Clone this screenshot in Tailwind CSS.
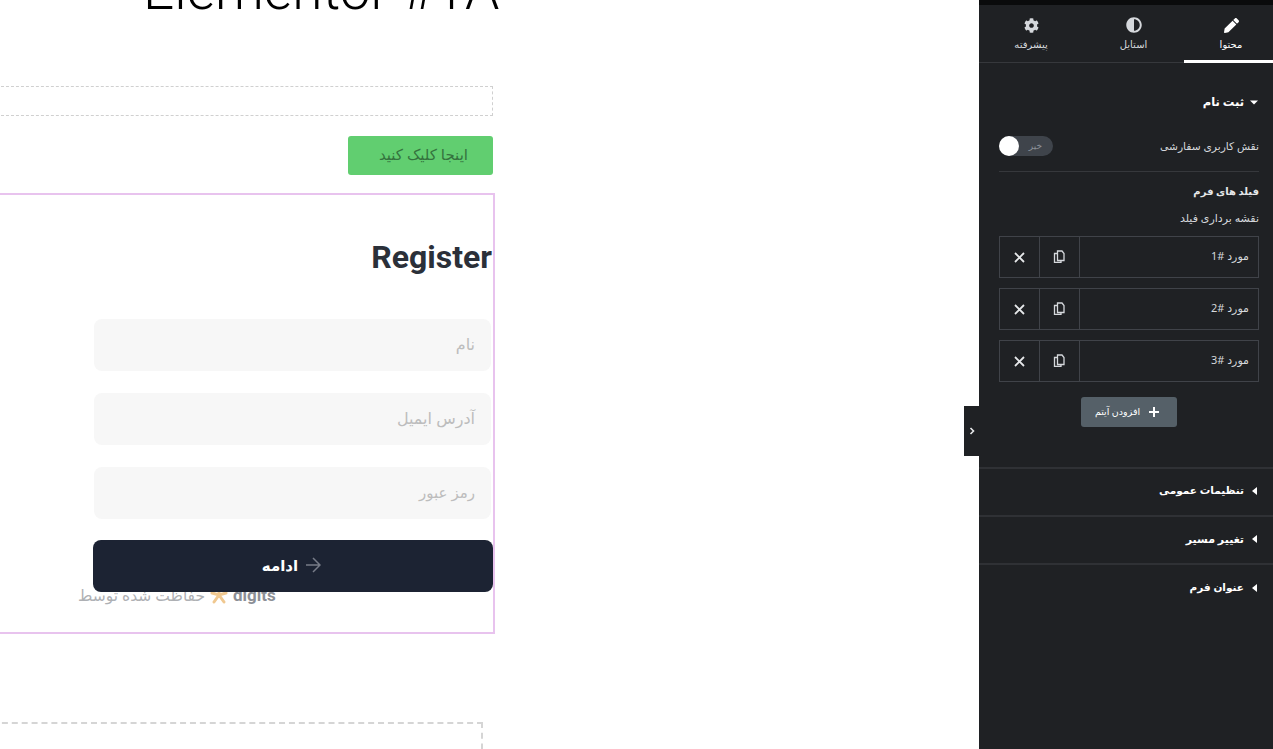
<!DOCTYPE html>
<html lang="fa">
<head>
  <meta charset="UTF-8" />
  <meta name="viewport" content="width=device-width, initial-scale=1.0" />
  <title>Elementor</title>
  <script src="https://cdn.jsdelivr.net/npm/@tailwindcss/browser@4"></script>
</head>
<body class="h-[749px] overflow-hidden bg-white font-['Noto_Sans','DejaVu_Sans',sans-serif]">
  <div class="flex h-[749px]">

    <!-- Canvas -->
    <main class="relative w-[979px] shrink-0 overflow-hidden bg-white">
      <div class="w-[493px]">
        <h1 dir="ltr" class="-mt-[41px] h-[127px] whitespace-nowrap pl-[143px] font-['Roboto',sans-serif] text-[55px] leading-[62px] font-light text-black">Elementor #1A</h1>
        <div class="h-[30px] -ml-1 border border-dashed border-[#d0d0d0]"></div>
        <div class="mt-5 flex justify-end">
          <a dir="rtl" class="flex h-[39px] w-[145px] items-center rounded-[3px] bg-[#61ce70] pr-[25px] pb-[2px] text-[15px] text-[#34733e]">اینجا کلیک کنید</a>
        </div>

        <!-- Selected register widget -->
        <section class="mt-[18px] -ml-1 h-[441px] w-[499px] border-2 border-[#e8c3ee] pt-[44px]">
          <h2 class="pr-[1px] text-right font-['Roboto',sans-serif] text-[32px] leading-[36px] font-bold text-[#2b3039]">Register</h2>
          <form dir="rtl" class="mt-[44px] ml-[95px] flex w-[400px] flex-col">
            <div class="mr-[2px] flex h-[52px] w-[397px] items-center rounded-lg bg-[#f7f7f7] pr-4 pb-[2px] text-[16px] text-[#bdbdbd]">نام</div>
            <div class="mt-[22px] mr-[2px] flex h-[52px] w-[397px] items-center rounded-lg bg-[#f7f7f7] pr-4 pb-[2px] text-[16px] text-[#bdbdbd]">آدرس ایمیل</div>
            <div class="mt-[22px] mr-[2px] flex h-[52px] w-[397px] items-center rounded-lg bg-[#f7f7f7] pr-4 pb-[2px] text-[15px] text-[#bdbdbd]">رمز عبور</div>
            <button type="button" class="relative z-10 mt-[21px] flex h-[52px] w-[400px] items-center justify-center gap-[7px] rounded-lg bg-[#1c2333] pr-[3px] pb-[2px] text-[15px] font-bold text-white">
              <svg class="h-[16px] w-[16px]" viewBox="0 0 16 16" fill="none" stroke="#777c88" stroke-width="1.5"><path d="M1 8h14M8 1l7 7-7 7"/></svg>
              <span>ادامه</span>
            </button>
          </form>
          <div dir="ltr" class="-mt-[7px] ml-[80px] flex items-center gap-[5px] text-[#aeb0b4]">
            <span dir="rtl" class="text-[15.5px] leading-[20px]">حفاظت شده توسط</span>
            <svg class="h-[18px] w-[18px]" viewBox="0 0 18 18" fill="none" stroke="#f0c890" stroke-width="3" stroke-linecap="round"><path d="M9 2v6M2 7l7 2 7-2M4 16l5-7 5 7"/></svg>
            <span class="font-['Roboto',sans-serif] text-[17px] leading-[20px] font-bold text-[#8c8f96]">digits</span>
          </div>
        </section>
      </div>
      <div class="mt-[88px] -ml-2 h-[60px] w-[491px] border-2 border-dashed border-[#d5d5d5]"></div>

      <!-- Panel collapse handle -->
      <button type="button" class="absolute top-[406px] right-0 flex h-[50px] w-[15px] items-center justify-center bg-[#1f2124]">
        <svg class="h-2 w-2" viewBox="0 0 8 8" fill="none" stroke="#e6e8ea" stroke-width="1.6"><path d="M2.5 1l3 3-3 3"/></svg>
      </button>
    </main>

    <!-- Editor panel -->
    <aside dir="rtl" class="flex w-[294px] shrink-0 flex-col bg-[#1f2124] text-[#e6e8ea]">
      <div class="h-[5px] bg-[#0a0b0c]"></div>

      <div class="flex h-[58px] border-b border-[#36383c]">
        <button type="button" class="flex h-[58px] w-[89px] flex-col items-center border-b-[3px] border-white pt-[13px] pl-[5px] text-white">
          <svg class="h-[15px] w-[15px]" viewBox="0 0 512 512" fill="currentColor"><path d="M497.9 142.1l-46.1 46.1c-4.7 4.7-12.3 4.7-17 0l-111-111c-4.7-4.7-4.7-12.3 0-17l46.1-46.1c18.7-18.7 49.1-18.7 67.9 0l60.1 60.1c18.8 18.7 18.8 49.1 0 67.9zM284.2 99.8L21.6 362.4.4 483.9c-2.9 16.4 11.4 30.6 27.8 27.8l121.5-21.3 262.6-262.6c4.7-4.7 4.7-12.3 0-17l-111-111c-4.8-4.7-12.4-4.7-17.1 0z"/></svg>
          <span class="mt-[4px] text-[10px] leading-[14px]">محتوا</span>
        </button>
        <button type="button" class="flex h-[58px] w-[101px] flex-col items-center pt-[12px] text-[#d5d8dc]">
          <svg class="h-[16px] w-[16px]" viewBox="0 0 512 512" fill="currentColor"><path d="M8 256c0 136.967 111.033 248 248 248s248-111.033 248-248S392.967 8 256 8 8 119.033 8 256zm248 184V72c101.705 0 184 82.311 184 184 0 101.705-82.311 184-184 184z"/></svg>
          <span class="mt-[4px] text-[10px] leading-[14px]">استایل</span>
        </button>
        <button type="button" class="flex h-[58px] w-[104px] flex-col items-center pt-[13px] text-[#d5d8dc]">
          <svg class="h-[15px] w-[15px]" viewBox="0 0 512 512" fill="currentColor"><path d="M487.4 315.7l-42.6-24.6c4.3-23.2 4.3-47 0-70.2l42.6-24.6c4.9-2.8 7.1-8.6 5.5-14-11.1-35.6-30-67.8-54.7-94.6-3.8-4.1-10-5.1-14.8-2.3L380.8 110c-17.9-15.4-38.5-27.3-60.8-35.1V25.8c0-5.6-3.9-10.5-9.4-11.7-36.7-8.2-74.3-7.8-109.2 0-5.5 1.2-9.4 6.1-9.4 11.7V75c-22.2 7.9-42.8 19.8-60.8 35.1L88.7 85.5c-4.9-2.8-11-1.9-14.8 2.3-24.7 26.7-43.6 58.9-54.7 94.6-1.7 5.4.6 11.2 5.5 14L67.3 221c-4.3 23.2-4.3 47 0 70.2l-42.6 24.6c-4.9 2.8-7.1 8.6-5.5 14 11.1 35.6 30 67.8 54.7 94.6 3.8 4.1 10 5.1 14.8 2.3l42.6-24.6c17.9 15.4 38.5 27.3 60.8 35.1v49.2c0 5.6 3.9 10.5 9.4 11.7 36.7 8.2 74.3 7.8 109.2 0 5.5-1.2 9.4-6.1 9.4-11.7v-49.2c22.2-7.9 42.8-19.8 60.8-35.1l42.6 24.6c4.9 2.8 11 1.9 14.8-2.3 24.7-26.7 43.6-58.9 54.7-94.6 1.5-5.5-.7-11.3-5.6-14.1zM256 336c-44.1 0-80-35.9-80-80s35.9-80 80-80 80 35.9 80 80-35.9 80-80 80z"/></svg>
          <span class="mt-[4px] text-[10px] leading-[14px]">پیشرفته</span>
        </button>
      </div>

      <!-- Open section -->
      <section class="h-[406px] shrink-0 border-b-2 border-[#2f3135] pr-[14px] pl-[20px]">
        <h3 class="mt-[30px] flex h-[18px] items-center gap-[6px] pr-[1px] text-[11.5px] font-bold text-white">
          <svg class="h-[8px] w-[8px]" viewBox="0 0 8 8" fill="currentColor"><path d="M0 2.5h8L4 6.5z"/></svg>
          ثبت نام
        </h3>
        <div class="mt-[25px] flex h-[20px] items-center justify-between">
          <span class="text-[10.7px] text-[#d5d8dc]">نقش کاربری سفارشی</span>
          <span class="flex h-[20px] w-[54px] items-center justify-between rounded-full bg-[#3f444b]" dir="ltr">
            <span class="h-[20px] w-[20px] rounded-full bg-white"></span>
            <span class="pr-[11px] text-[9px] text-[#8c9198]">خیر</span>
          </span>
        </div>
        <hr class="mt-[15px] border-[#36383c]" />
        <h4 class="mt-[10px] text-[10px] leading-[18px] font-bold text-[#e6e8ea]">فیلد های فرم</h4>
        <p class="mt-[9px] text-[11px] leading-[18px] text-[#d5d8dc]">نقشه برداری فیلد</p>

        <ul class="mt-[9px] flex flex-col gap-[10px]">
          <li class="flex h-[42px] items-stretch border border-[#404349]">
            <span class="flex flex-1 items-center pr-[9px] pb-[2px] text-[11px] text-[#d5d8dc]">مورد #1</span>
            <span class="flex w-[40px] items-center justify-center border-r border-[#404349] pb-[1px]">
              <svg class="h-[13px] w-[13px]" viewBox="0 0 13 13" fill="none" stroke="#d5d8dc" stroke-width="1.3"><path d="M4.5 3.5H1.5v9h6.5v-2.5M4.5 1v9.5H11V3.5L9 1z"/></svg>
            </span>
            <span class="flex w-[40px] items-center justify-center border-r border-[#404349]">
              <svg class="h-[11px] w-[11px]" viewBox="0 0 11 11" fill="none" stroke="#e6e8ea" stroke-width="1.8"><path d="M1 1l9 9M10 1l-9 9"/></svg>
            </span>
          </li>
          <li class="flex h-[42px] items-stretch border border-[#404349]">
            <span class="flex flex-1 items-center pr-[9px] pb-[2px] text-[11px] text-[#d5d8dc]">مورد #2</span>
            <span class="flex w-[40px] items-center justify-center border-r border-[#404349] pb-[1px]">
              <svg class="h-[13px] w-[13px]" viewBox="0 0 13 13" fill="none" stroke="#d5d8dc" stroke-width="1.3"><path d="M4.5 3.5H1.5v9h6.5v-2.5M4.5 1v9.5H11V3.5L9 1z"/></svg>
            </span>
            <span class="flex w-[40px] items-center justify-center border-r border-[#404349]">
              <svg class="h-[11px] w-[11px]" viewBox="0 0 11 11" fill="none" stroke="#e6e8ea" stroke-width="1.8"><path d="M1 1l9 9M10 1l-9 9"/></svg>
            </span>
          </li>
          <li class="flex h-[42px] items-stretch border border-[#404349]">
            <span class="flex flex-1 items-center pr-[9px] pb-[2px] text-[11px] text-[#d5d8dc]">مورد #3</span>
            <span class="flex w-[40px] items-center justify-center border-r border-[#404349] pb-[1px]">
              <svg class="h-[13px] w-[13px]" viewBox="0 0 13 13" fill="none" stroke="#d5d8dc" stroke-width="1.3"><path d="M4.5 3.5H1.5v9h6.5v-2.5M4.5 1v9.5H11V3.5L9 1z"/></svg>
            </span>
            <span class="flex w-[40px] items-center justify-center border-r border-[#404349]">
              <svg class="h-[11px] w-[11px]" viewBox="0 0 11 11" fill="none" stroke="#e6e8ea" stroke-width="1.8"><path d="M1 1l9 9M10 1l-9 9"/></svg>
            </span>
          </li>
        </ul>

        <button type="button" class="mx-auto mt-[15px] flex h-[30px] w-[96px] items-center justify-center gap-[9px] rounded-[3px] bg-[#556068] pr-[4px] text-[9.5px] text-white">
          <svg class="h-[10px] w-[10px]" viewBox="0 0 10 10" fill="none" stroke="currentColor" stroke-width="2"><path d="M5 0v10M0 5h10"/></svg>
          افزودن آیتم
        </button>
      </section>

      <!-- Closed sections -->
      <h3 class="flex h-[48px] shrink-0 items-center gap-[8px] border-b-2 border-[#2f3135] pr-[16px] pb-[2px] text-[10.5px] font-bold text-white">
        <svg class="h-[8px] w-[5px]" viewBox="0 0 5 8" fill="currentColor"><path d="M5 0v8L0 4z"/></svg>
        تنظیمات عمومی
      </h3>
      <h3 class="flex h-[48px] shrink-0 items-center gap-[8px] border-b-2 border-[#2f3135] pr-[16px] pb-[2px] text-[11px] font-bold text-white">
        <svg class="h-[8px] w-[5px]" viewBox="0 0 5 8" fill="currentColor"><path d="M5 0v8L0 4z"/></svg>
        تغییر مسیر
      </h3>
      <h3 class="flex h-[48px] shrink-0 items-center gap-[8px] pr-[16px] pb-[2px] text-[10.5px] font-bold text-white">
        <svg class="h-[8px] w-[5px]" viewBox="0 0 5 8" fill="currentColor"><path d="M5 0v8L0 4z"/></svg>
        عنوان فرم
      </h3>
    </aside>
  </div>
</body>
</html>
